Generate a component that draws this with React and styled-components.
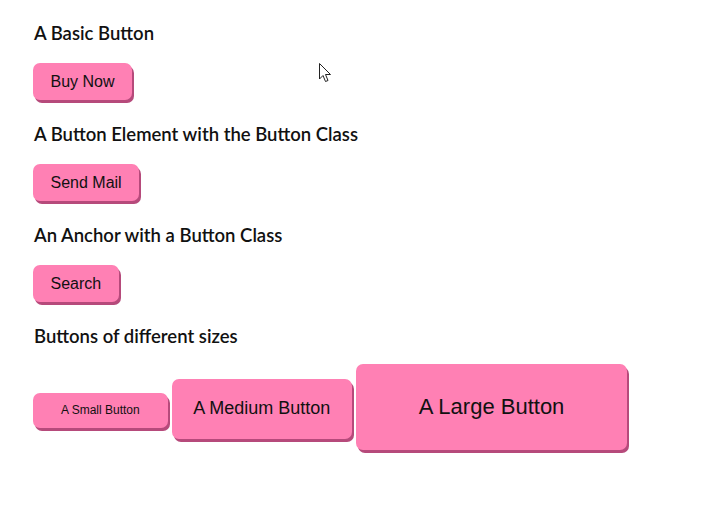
import React from 'react';
import styled, { createGlobalStyle } from 'styled-components';

const Global = createGlobalStyle`
    html, body {
        margin: 0;
        padding: 0;
        background: #fff;
    }
`;

const Page = styled.div`
    position: relative;
    width: 717px;
    height: 518px;
    padding: 22px 0 0 33px;
    box-sizing: border-box;
    font-family: Lato, "Open Sans", sans-serif;
`;

const Section = styled.section`
    display: flex;
    flex-direction: column;
    align-items: flex-start;
    margin-bottom: 23px;
`;

const Title = styled.h2`
    margin: 0 0 ${(p) => p.gap || 19}px 1px;
    font-size: 18.5px;
    line-height: 22px;
    font-weight: 600;
    color: #111;
`;

const sizes = {
    normal: { font: 16, line: 19, py: 9, px: 17.5 },
    small: { font: 12, line: 15, py: 10, px: 28 },
    medium: { font: 18, line: 21, py: 19.5, px: 21.5 },
    large: { font: 22, line: 26, py: 30, px: 63 }
};

const PinkButton = styled.button`
    display: inline-block;
    box-sizing: border-box;
    margin: 0;
    border: none;
    border-radius: 7px;
    background: #ff80b4;
    box-shadow: 2px 3px 0 #b64a7b;
    color: #111;
    font-family: "Liberation Sans", Arial, sans-serif;
    font-size: ${(p) => sizes[p.size || 'normal'].font}px;
    line-height: ${(p) => sizes[p.size || 'normal'].line}px;
    padding: ${(p) => sizes[p.size || 'normal'].py}px ${(p) => sizes[p.size || 'normal'].px}px;
    text-decoration: none;
    cursor: pointer;
`;

const SizeRow = styled.div`
    display: flex;
    align-items: baseline;
    gap: 4px;
`;

const Cursor = styled.svg`
    position: absolute;
    left: 319px;
    top: 63px;
`;

const App = () => (
    <Page>
        <Global />
        <Section>
            <Title>A Basic Button</Title>
            <PinkButton>Buy Now</PinkButton>
        </Section>
        <Section>
            <Title>A Button Element with the Button Class</Title>
            <PinkButton>Send Mail</PinkButton>
        </Section>
        <Section>
            <Title>An Anchor with a Button Class</Title>
            <PinkButton as="a" href="#">Search</PinkButton>
        </Section>
        <Section>
            <Title gap={17}>Buttons of different sizes</Title>
            <SizeRow>
                <PinkButton size="small">A Small Button</PinkButton>
                <PinkButton size="medium">A Medium Button</PinkButton>
                <PinkButton size="large">A Large Button</PinkButton>
            </SizeRow>
        </Section>
        <Cursor width="13" height="20" viewBox="0 0 13 20">
            <path d="M0.5 0.5 L0.5 16 L4 12.5 L6.5 18.5 L9 17.5 L6.5 11.5 L11.5 11.5 Z" fill="#fff" stroke="#222" strokeWidth="1" />
        </Cursor>
    </Page>
);

export default App;
